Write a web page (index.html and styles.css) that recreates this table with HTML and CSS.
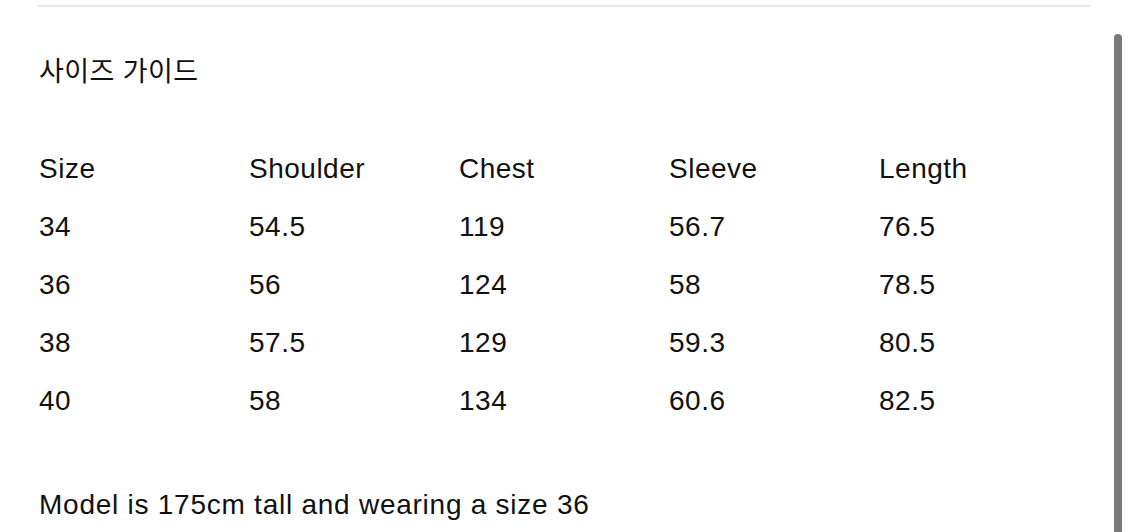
FILE: index.html
```html
<!DOCTYPE html>
<html lang="ko">
<head>
<meta charset="utf-8">
<link rel="stylesheet" href="styles.css">
</head>
<body>
<div class="page">
  <div class="rule"></div>
  <div class="content">
    <h2 class="title">사이즈 가이드</h2>
    <div class="table">
      <div class="row head">
        <div>Size</div><div>Shoulder</div><div>Chest</div><div>Sleeve</div><div>Length</div>
      </div>
      <div class="row">
        <div>34</div><div>54.5</div><div>119</div><div>56.7</div><div>76.5</div>
      </div>
      <div class="row">
        <div>36</div><div>56</div><div>124</div><div>58</div><div>78.5</div>
      </div>
      <div class="row">
        <div>38</div><div>57.5</div><div>129</div><div>59.3</div><div>80.5</div>
      </div>
      <div class="row">
        <div>40</div><div>58</div><div>134</div><div>60.6</div><div>82.5</div>
      </div>
    </div>
    <p class="note">Model is 175cm tall and wearing a size 36</p>
  </div>
</div>
<div class="scrollbar"></div>
</body>
</html>
```
FILE: styles.css
```css
html, body {
  margin: 0;
  padding: 0;
  background: #ffffff;
}
body {
  width: 1125px;
  height: 532px;
  overflow: hidden;
  position: relative;
  font-family: "Liberation Sans", Arial, "Noto Sans CJK KR", sans-serif;
  color: #111111;
}
.page {
  padding: 5px 35px 0 38px;
}
.rule {
  height: 2px;
  background: #e6e6e6;
}
.content {
  padding-left: 1px;
}
.title {
  margin: 43px 0 0 0;
  height: 40px;
  line-height: 40px;
  font-family: "Noto Sans CJK KR", sans-serif;
  font-weight: 400;
  font-size: 27px;
  letter-spacing: 0.4px;
}
.table {
  margin-top: 50px;
  display: flex;
  flex-direction: column;
}
.row {
  display: grid;
  grid-template-columns: repeat(5, 210px);
  height: 58px;
  line-height: 58px;
  font-size: 28px;
  letter-spacing: 0.5px;
}
.note {
  margin: 55px 0 0 0;
  height: 40px;
  line-height: 40px;
  font-size: 28px;
  letter-spacing: 0.75px;
}
.scrollbar {
  position: absolute;
  right: 3px;
  top: 34px;
  width: 8px;
  height: 520px;
  border-radius: 4px;
  background: #7b7b7b;
}
```
